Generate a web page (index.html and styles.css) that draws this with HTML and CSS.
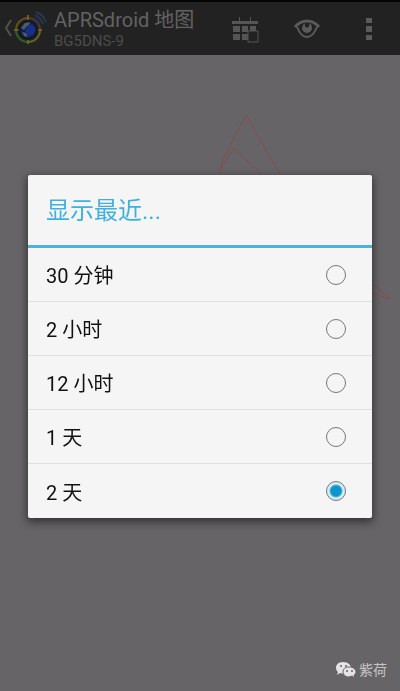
FILE: index.html
```html
<!DOCTYPE html>
<html lang="zh-CN">

<head>
    <meta charset="UTF-8">
    <meta name="viewport" content="width=device-width, initial-scale=1.0">
    <title>APRSdroid 地图</title>
    <link rel="stylesheet" href="styles.css">
</head>

<body>
    <!-- 顶部操作栏 -->
    <header class="bar">
        <a href="#" class="home" aria-label="返回">
            <svg class="back" width="8" height="22" viewBox="0 0 8 22">
                <path d="M7 2 L2 10 L7 18" fill="none" stroke="#505050" stroke-width="2" />
            </svg>
            <svg class="logo" width="36" height="38" viewBox="0 0 36 38" fill="none">
                <g stroke-width="2">
                    <path d="M4 20 A12 12 0 0 1 16 8" stroke="#675016" />
                    <path d="M16 8 A12 12 0 0 1 28 20" stroke="#693124" />
                    <path d="M28 20 A12 12 0 0 1 16 32" stroke="#676522" />
                    <path d="M16 32 A12 12 0 0 1 4 20" stroke="#315d30" />
                    <path d="M16 5v5M16 30v4M2 20h5M26 20h4" stroke="#66602a" />
                </g>
                <circle cx="16" cy="20" r="9" fill="#12213f" stroke="#101010" />
                <path d="M9 18l4-5 5-1-1 3-3 2-2 3z" fill="#4f5a6c" />
                <path d="M15 17l5-3 4 5-3 6-4 1-4-4z" fill="#16308a" />
                <path d="M10 22l4 1 2 4-4-1z" fill="#525d6b" />
                <path d="M22 9q4 2 5 6M23 5q6 3 8 9M24 2q8 3 10 10" stroke="#263750" stroke-width="2" />
            </svg>
        </a>
        <div class="name">
            <h1>APRSdroid 地图</h1>
            <p>BG5DNS-9</p>
        </div>
        <nav class="actions">
            <button type="button" aria-label="时间范围">
                <svg width="28" height="28" viewBox="0 0 28 28" fill="#555">
                    <path d="M1 6h26v3H1zM8 2h1v5H8zM19 2h1v5h-1z" />
                    <path d="M2 11h7v6H2zM11 11h6v6h-6zM19 11h6v5h-6zM2 19h7v6H2zM11 19h6v6h-6z" />
                    <path d="M17 16h10v11H17z" fill="#222" stroke="#555" />
                </svg>
            </button>
            <button type="button" aria-label="显示">
                <svg width="28" height="28" viewBox="0 0 28 28" fill="none">
                    <path d="M2 12Q7 6 14 6T26 12" stroke="#5b5b5b" stroke-width="3" />
                    <path d="M4 12Q8 22 14 22T24 12" stroke="#5b5b5b" stroke-width="2" />
                    <path d="M11 8L9 13a5 5 0 0 0 10 0Q19 10 17 8L16 11a2 2 0 0 1-4-1z" fill="#5b5b5b" />
                </svg>
            </button>
            <button type="button" aria-label="更多">
                <svg width="28" height="28" viewBox="0 0 28 28" fill="#5b5b5b">
                    <path d="M11 3h6v5h-6zM11 11h6v6h-6zM11 20h6v5h-6z" />
                </svg>
            </button>
        </nav>
    </header>

    <!-- 地图和轨迹 -->
    <main class="map">
        <svg class="track" viewBox="0 0 400 636" preserveAspectRatio="xMidYMin meet">
            <path d="M220 120 L222 106 L246 60 L281 121 M221 113 L234 93 L264 121 M371 227 L390 244 L371 237" />
        </svg>
    </main>

    <!-- 水印 -->
    <div class="mark">
        <svg width="22" height="18" viewBox="0 0 22 18">
            <path d="M8 1C3 1 1 4 1 7c0 2 1 3 2 4l-1 3 3-2 4 1c4 0 7-3 7-6s-3-6-8-6z" fill="#e4e4e4" />
            <path d="M14 6c-4 0-6 2-6 5s3 5 6 5l3-1 3 2-1-3c1-1 2-2 2-3 0-3-3-5-7-5z" fill="#e4e4e4" stroke="#666466" />
            <g fill="#666466">
                <circle cx="6" cy="5" r="1" />
                <circle cx="11" cy="5" r="1" />
                <circle cx="12" cy="10" r="1" />
                <circle cx="17" cy="10" r="1" />
            </g>
        </svg>
        <span>紫荷</span>
    </div>

    <!-- 弹出对话框 -->
    <div class="mask">
        <form class="dialog" role="dialog" aria-labelledby="dialog-title">
            <h2 id="dialog-title">显示最近...</h2>
            <ul>
                <li><label for="m30">30 分钟</label><input type="radio" name="age" id="m30"></li>
                <li><label for="h2">2 小时</label><input type="radio" name="age" id="h2"></li>
                <li><label for="h12">12 小时</label><input type="radio" name="age" id="h12"></li>
                <li><label for="d1">1 天</label><input type="radio" name="age" id="d1"></li>
                <li><label for="d2">2 天</label><input type="radio" name="age" id="d2" checked></li>
            </ul>
        </form>
    </div>
</body>

</html>
```

FILE: styles.css
```css
* {
    box-sizing: border-box;
    margin: 0;
    padding: 0;
}

body {
    display: flex;
    flex-direction: column;
    min-height: 100vh;
    background-color: #666466;
    font-family: Roboto, "Noto Sans CJK SC", sans-serif;
}

ul {
    list-style: none;
}

svg {
    display: block;
}

/* 顶部操作栏 */
.bar {
    display: flex;
    align-items: center;
    height: 55px;
    padding-left: 4px;
    border-top: 2px solid #050505;
    background-color: #222;
}

.home {
    display: flex;
    align-items: center;
}

.name {
    flex: 1;
    padding-left: 6px;
    white-space: nowrap;
}

.name h1 {
    color: #626262;
    font-size: 20px;
    font-weight: 400;
    line-height: 24px;
}

.name p {
    color: #4c4c4c;
    font-size: 15px;
    line-height: 18px;
}

.actions {
    display: flex;
}

.actions button {
    display: flex;
    justify-content: center;
    width: 62px;
    border: 0;
    background: none;
}

/* 地图 */
.map {
    flex: 1;
}

.track {
    width: 100%;
    fill: none;
    stroke: #854c50;
}

/* 水印 */
.mark {
    position: absolute;
    right: 13px;
    bottom: 11px;
    display: flex;
    align-items: center;
    gap: 2px;
    color: #c4c4c4;
    font-size: 14px;
    line-height: 20px;
}

/* 对话框 */
.mask {
    position: fixed;
    inset: 0;
    display: flex;
    align-items: center;
    padding: 2px 28px 0;
}

.dialog {
    flex: 1;
    border-radius: 2px;
    background-color: #f5f5f5;
    box-shadow: 0 3px 8px 1px rgba(0, 0, 0, .5);
}

.dialog h2 {
    padding: 3px 18px 0;
    border-bottom: 3px solid #4db3d9;
    color: #3fb1de;
    font-size: 24px;
    font-weight: 400;
    line-height: 67px;
}

.dialog li {
    display: flex;
    align-items: center;
    height: 54px;
    padding: 0 26px 0 18px;
    border-bottom: 1px solid #dfdfdf;
}

.dialog li:last-child {
    border-bottom: 0;
}

.dialog label {
    flex: 1;
    padding-top: 3px;
    color: #111;
    font-size: 20px;
    line-height: 50px;
}

.dialog input {
    width: 20px;
    height: 20px;
    border: 1px solid #777;
    border-radius: 50%;
    appearance: none;
}

.dialog input:checked {
    background: radial-gradient(circle, #0d96c9 5px, #62b8da 6px, #d5edf6 7px);
}
```
